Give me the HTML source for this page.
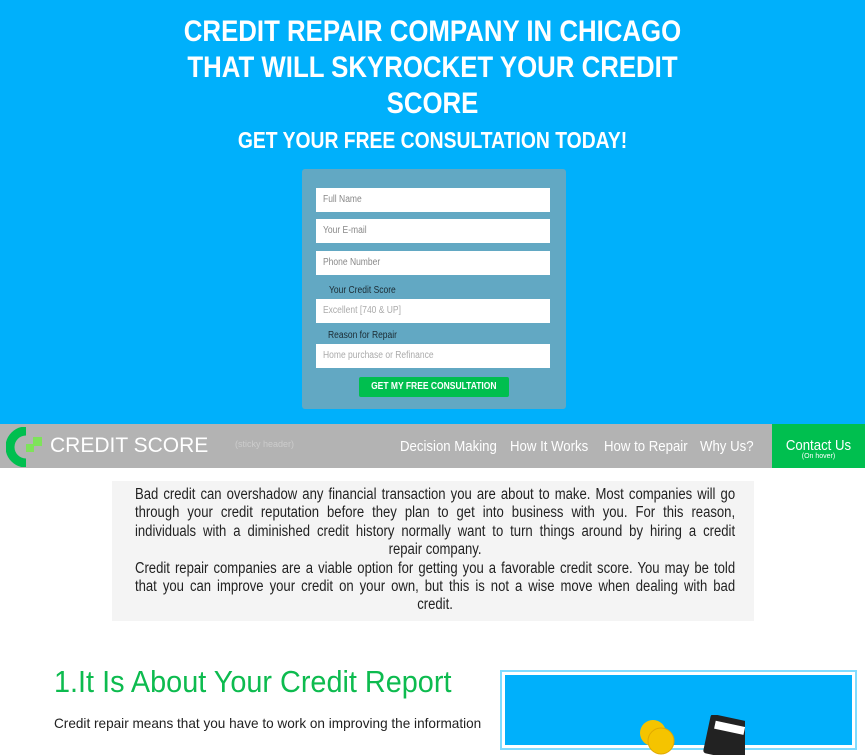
<!DOCTYPE html>
<html><head><meta charset="utf-8"><style>
*{margin:0;padding:0;box-sizing:border-box}
body{width:865px;height:738px;overflow:hidden;background:#fff;font-family:"Liberation Sans",sans-serif;}
.hero{position:absolute;left:0;top:0;width:865px;height:424px;background:#00b0fb;}
.h1{position:absolute;top:14px;left:0;width:865px;text-align:center;color:#fff;font-weight:bold;font-size:30px;line-height:36px;transform:scaleX(0.86)}
.h2{position:absolute;top:127px;left:0;width:865px;text-align:center;color:#fff;font-weight:bold;font-size:23px;transform:scaleX(0.84)}
.form{position:absolute;left:302px;top:169px;width:264px;height:240px;background:#62a8c3;border-radius:3px}
.in{position:absolute;left:14px;width:234px;height:24px;background:#fff;color:#888;font-size:10px;line-height:24px;padding-left:7px}
.in span,.lb span{display:inline-block;transform:scaleX(0.85);transform-origin:left}
.lb{position:absolute;font-size:10px;color:#1b2b33}
.btn{position:absolute;left:57px;top:208px;width:150px;height:20px;background:#00bf4f;border-radius:2px;color:#fff;font-weight:bold;font-size:10px;text-align:center;line-height:20px}
.nav{position:absolute;left:0;top:424px;width:865px;height:44px;background:#b3b3b3}
.logo{position:absolute;left:50px;top:10px;font-size:21px;color:#fff}
.nav a{position:absolute;top:14px;color:#fff;font-size:15px;transform:scaleX(0.88);transform-origin:left}
.contact{position:absolute;left:772px;top:0;width:93px;height:44px;background:#00bf4f;color:#fff;text-align:center}
.box{position:absolute;left:112px;top:481px;width:642px;height:140px;background:#f4f4f4}
.tx{position:absolute;left:23px;top:5px;width:706px;font-size:15.4px;line-height:18.4px;color:#222;transform:scaleX(0.85);transform-origin:left top}
.j{text-align:justify;text-align-last:justify;white-space:nowrap}
.c{text-align:center;white-space:nowrap}
.sec{position:absolute;left:54px;top:664px;color:#0dbb4f;font-size:31px;transform:scaleX(0.93);transform-origin:left;white-space:nowrap}
.p{position:absolute;left:54px;top:715px;font-size:14px;color:#222;transform:scaleX(0.97);transform-origin:left;white-space:nowrap}
.img{position:absolute;left:500px;top:670px;width:357px;height:80px;border:2px solid #7fdcff;padding:3px}
.img div{width:100%;height:100%;background:#00b0fb;position:relative}
</style></head><body>
<div class="hero">
<div class="h1">CREDIT REPAIR COMPANY IN CHICAGO<br>THAT WILL SKYROCKET YOUR CREDIT<br>SCORE</div>
<div class="h2">GET YOUR FREE CONSULTATION TODAY!</div>
<div class="form">
<div class="in" style="top:19px"><span>Full Name</span></div>
<div class="in" style="top:50px"><span>Your E-mail</span></div>
<div class="in" style="top:82px"><span>Phone Number</span></div>
<div class="lb" style="left:27px;top:116px"><span>Your Credit Score</span></div>
<div class="in" style="top:130px;color:#aaa"><span>Excellent [740 &amp; UP]</span></div>
<div class="lb" style="left:26px;top:161px"><span>Reason for Repair</span></div>
<div class="in" style="top:175px;color:#aaa"><span>Home purchase or Refinance</span></div>
<div class="btn"><span style="display:inline-block;transform:scaleX(0.85)">GET MY FREE CONSULTATION</span></div>
</div>
</div>
<div class="nav">
<svg style="position:absolute;left:6px;top:3px" width="44" height="40"><path d="M20 4 A16 16 0 0 0 20 36" stroke="#00bf4f" stroke-width="9" fill="none"/><rect x="20" y="17" width="8" height="8" fill="#7ee35a"/><rect x="27" y="10" width="9" height="9" fill="#7ee35a"/></svg>
<div class="logo">CREDIT SCORE</div>
<div style="position:absolute;left:235px;top:15px;font-size:9px;color:#ccc">(sticky header)</div>
<a style="left:400px">Decision Making</a>
<a style="left:510px">How It Works</a>
<a style="left:604px">How to Repair</a>
<a style="left:700px">Why Us?</a>
<div class="contact"><div style="font-size:15px;padding-top:14px;line-height:15px;transform:scaleX(0.88)">Contact Us</div><div style="font-size:7px;line-height:8px">(On hover)</div></div>
</div>
<div class="box"><div class="tx">
<div class="j">Bad credit can overshadow any financial transaction you are about to make. Most companies will go</div>
<div class="j">through your credit reputation before they plan to get into business with you. For this reason,</div>
<div class="j">individuals with a diminished credit history normally want to turn things around by hiring a credit</div>
<div class="c">repair company.</div>
<div class="j">Credit repair companies are a viable option for getting you a favorable credit score. You may be told</div>
<div class="j">that you can improve your credit on your own, but this is not a wise move when dealing with bad</div>
<div class="c">credit.</div>
</div></div>
<div class="sec">1.It Is About Your Credit Report</div>
<div class="p">Credit repair means that you have to work on improving the information</div>
<div class="img"><div>
<svg style="position:absolute;left:130px;top:40px" width="110" height="40"><circle cx="18" cy="18" r="13" fill="#f5c400"/><circle cx="26" cy="26" r="13" fill="#f5c400" stroke="#e0a800"/><rect x="72" y="2" width="42" height="40" rx="3" fill="#222" transform="rotate(12 90 20)"/><rect x="78" y="8" width="30" height="8" fill="#fff" transform="rotate(12 90 20)"/></svg>
</div></div>
</body></html>
